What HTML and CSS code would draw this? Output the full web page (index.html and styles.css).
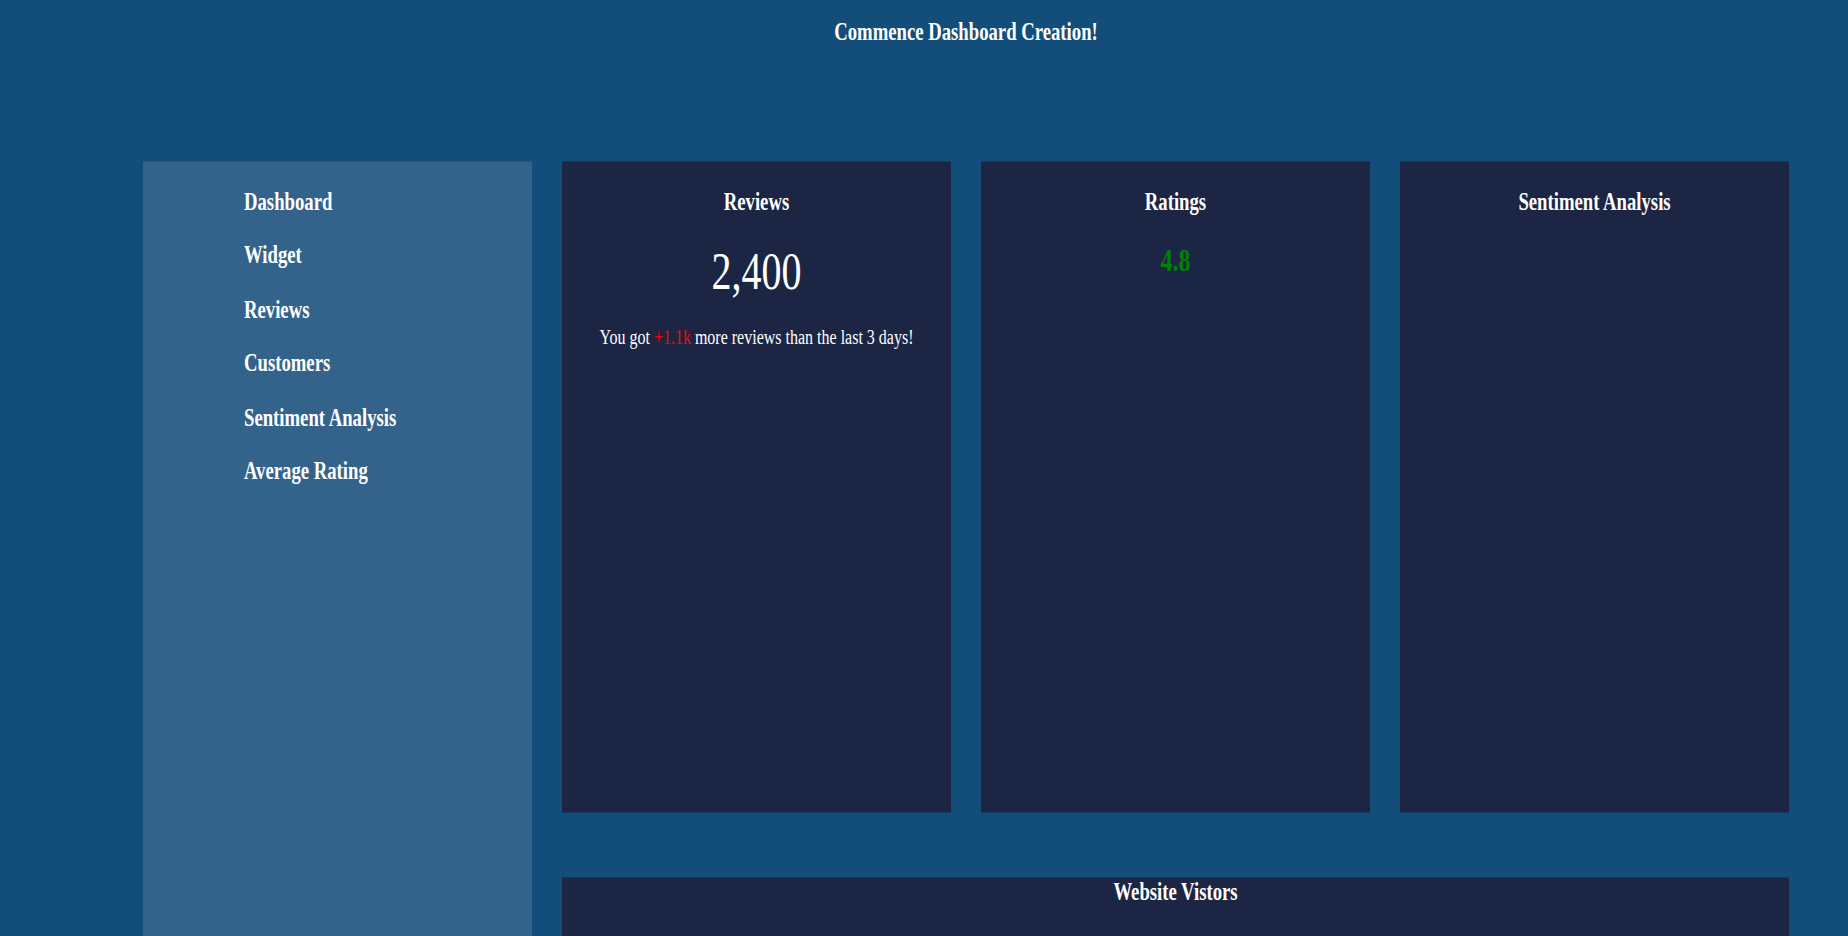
FILE: index.html
```html
<!DOCTYPE html>
<html lang="en">
<head>
<meta charset="utf-8">
<title>Dashboard</title>
<link rel="stylesheet" href="styles.css">
</head>
<body>
<div class="page">
  <header class="header">
    <h1 class="title">Commence Dashboard Creation!</h1>
  </header>
  <main class="grid">
    <nav class="sidebar">
      <div class="nav-item">Dashboard</div>
      <div class="nav-item">Widget</div>
      <div class="nav-item">Reviews</div>
      <div class="nav-item">Customers</div>
      <div class="nav-item">Sentiment Analysis</div>
      <div class="nav-item">Average Rating</div>
    </nav>
    <section class="card">
      <h3 class="card-title">Reviews</h3>
      <div class="big-number">2,400</div>
      <p class="card-note">You got <span class="up">+1.1k</span> more reviews than the last 3 days!</p>
    </section>
    <section class="card">
      <h3 class="card-title">Ratings</h3>
      <h2 class="rating">4.8</h2>
    </section>
    <section class="card">
      <h3 class="card-title">Sentiment Analysis</h3>
    </section>
    <section class="card wide">
      <h3 class="wide-title">Website Vistors</h3>
    </section>
  </main>
</div>
</body>
</html>
```

FILE: styles.css
```css
html, body {
  margin: 0;
  padding: 0;
  height: 936px;
  overflow: hidden;
  background: #134e7a;
}

body {
  font-family: "Liberation Serif", "Times New Roman", serif;
  color: #ffffff;
}

.page {
  width: 1646px;
  height: 719px;
  padding-left: 143px;
  overflow: hidden;
  transform: scaleY(1.302);
  transform-origin: 0 0;
}

.header {
  box-sizing: border-box;
  height: 123.7px;
  padding-top: 13.6px;
}

.title {
  margin: 0;
  font-size: 18.72px;
  line-height: 1.15;
  font-weight: bold;
  text-align: center;
}

.grid {
  display: grid;
  grid-template-columns: repeat(4, 389px);
  grid-template-rows: 500px 45.4px;
  column-gap: 30px;
  row-gap: 50px;
}

.sidebar {
  grid-row: 1 / span 2;
  background: #33638b;
  padding: 20.3px 0 0 101px;
  display: flex;
  flex-direction: column;
  gap: 19.9px;
}

.nav-item {
  font-size: 18.72px;
  line-height: 1.15;
  font-weight: bold;
}

.card {
  background: #1c2543;
  padding-top: 20.2px;
  text-align: center;
}

.card-title {
  margin: 0;
  font-size: 18.72px;
  line-height: 1.15;
  font-weight: bold;
}

.big-number {
  margin-top: 20.4px;
  font-size: 40px;
  line-height: 1.15;
}

.card-note {
  margin: 18.3px 0 0;
  font-size: 16px;
  line-height: 1.15;
}

.up {
  color: #ff0000;
}

.rating {
  margin: 21.2px 0 0;
  font-size: 24px;
  line-height: 1.15;
  font-weight: bold;
  color: #008000;
}

.wide {
  grid-column: 2 / span 3;
  padding-top: 0;
}

.wide-title {
  margin: 0;
  font-size: 18.72px;
  line-height: 1.15;
  font-weight: bold;
}
```
